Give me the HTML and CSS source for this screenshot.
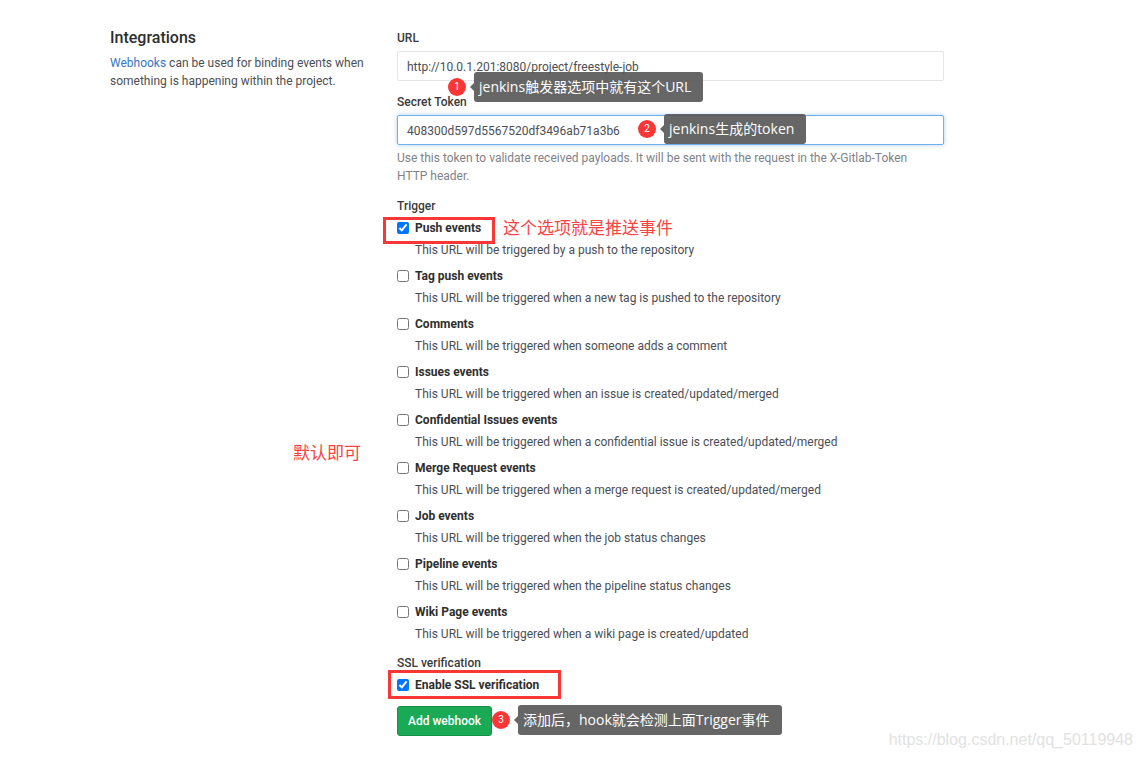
FILE: index.html
```html
<!DOCTYPE html>
<html lang="en">
<head>
<meta charset="utf-8">
<title>Integrations</title>
<meta name="viewport" content="width=device-width, initial-scale=1">
<link rel="stylesheet" href="styles.css">
</head>
<body>
<main class="settings">
  <aside class="intro">
    <h1 class="intro-title">Integrations</h1>
    <p class="intro-text"><a class="link" href="#webhooks">Webhooks</a> can be used for binding events when something is happening within the project.</p>
    <span class="note note-default" lang="zh">默认即可</span>
  </aside>

  <form class="hook-form" id="webhooks">
    <div class="field">
      <label class="label" for="url">URL</label>
      <input class="input" id="url" type="text" value="http://10.0.1.201:8080/project/freestyle-job">
      <div class="callout callout-url"><span class="badge">1</span><span class="bubble" lang="zh">jenkins触发器选项中就有这个URL</span></div>
    </div>

    <div class="field">
      <label class="label" for="token">Secret Token</label>
      <input class="input input-active" id="token" type="text" value="408300d597d5567520df3496ab71a3b6">
      <p class="help">Use this token to validate received payloads. It will be sent with the request in the X-Gitlab-Token HTTP header.</p>
      <div class="callout callout-token"><span class="badge">2</span><span class="bubble" lang="zh">jenkins生成的token</span></div>
    </div>

    <fieldset class="group">
      <legend class="label">Trigger</legend>
      <div class="option">
        <input class="check" type="checkbox" id="push" checked>
        <label class="option-name" for="push">Push events</label>
        <p class="option-text">This URL will be triggered by a push to the repository</p>
        <span class="frame frame-push"></span>
        <span class="note note-push" lang="zh">这个选项就是推送事件</span>
      </div>
      <div class="option">
        <input class="check" type="checkbox" id="tag">
        <label class="option-name" for="tag">Tag push events</label>
        <p class="option-text">This URL will be triggered when a new tag is pushed to the repository</p>
      </div>
      <div class="option">
        <input class="check" type="checkbox" id="comments">
        <label class="option-name" for="comments">Comments</label>
        <p class="option-text">This URL will be triggered when someone adds a comment</p>
      </div>
      <div class="option">
        <input class="check" type="checkbox" id="issues">
        <label class="option-name" for="issues">Issues events</label>
        <p class="option-text">This URL will be triggered when an issue is created/updated/merged</p>
      </div>
      <div class="option">
        <input class="check" type="checkbox" id="confidential">
        <label class="option-name" for="confidential">Confidential Issues events</label>
        <p class="option-text">This URL will be triggered when a confidential issue is created/updated/merged</p>
      </div>
      <div class="option">
        <input class="check" type="checkbox" id="merge">
        <label class="option-name" for="merge">Merge Request events</label>
        <p class="option-text">This URL will be triggered when a merge request is created/updated/merged</p>
      </div>
      <div class="option">
        <input class="check" type="checkbox" id="job">
        <label class="option-name" for="job">Job events</label>
        <p class="option-text">This URL will be triggered when the job status changes</p>
      </div>
      <div class="option">
        <input class="check" type="checkbox" id="pipeline">
        <label class="option-name" for="pipeline">Pipeline events</label>
        <p class="option-text">This URL will be triggered when the pipeline status changes</p>
      </div>
      <div class="option">
        <input class="check" type="checkbox" id="wiki">
        <label class="option-name" for="wiki">Wiki Page events</label>
        <p class="option-text">This URL will be triggered when a wiki page is created/updated</p>
      </div>
    </fieldset>

    <fieldset class="group">
      <legend class="label">SSL verification</legend>
      <div class="option">
        <input class="check" type="checkbox" id="ssl" checked>
        <label class="option-name" for="ssl">Enable SSL verification</label>
        <span class="frame frame-ssl"></span>
      </div>
    </fieldset>

    <div class="actions">
      <button class="button" type="button">Add webhook</button>
      <div class="callout callout-add"><span class="badge">3</span><span class="bubble" lang="zh">添加后，hook就会检测上面Trigger事件</span></div>
    </div>
  </form>
</main>
<span class="watermark">https://blog.csdn.net/qq_50119948</span>
</body>
</html>
```
FILE: styles.css
```css
* {
  box-sizing: border-box;
}

body {
  margin: 0;
  background: #fff;
  color: #4c4e54;
  font-family: Roboto, "Noto Sans CJK SC", sans-serif;
  font-size: 12px;
  line-height: 18px;
}

p {
  margin: 0;
}

.settings {
  display: grid;
  grid-template-columns: 277fr 547fr;
  column-gap: 10px;
  padding: 29px 197px 21px 110px;
}

.intro {
  position: relative;
}

.intro-title {
  margin: 0 0 7px;
  color: #2e2e2e;
  font-size: 16px;
  font-weight: 500;
  line-height: 18px;
}

.link {
  color: #3875c2;
  text-decoration: none;
}

.field {
  position: relative;
  margin-bottom: 12px;
}

.label {
  display: block;
  margin-bottom: 4px;
  padding: 0;
  color: #3a3a3a;
  font-weight: 500;
}

.input {
  display: block;
  width: 100%;
  height: 30px;
  padding: 1px 9px 0;
  border: 1px solid #e5e5e5;
  border-radius: 2px;
  background: #fff;
  color: #4c4e54;
  font: inherit;
}

.input-active {
  border-color: #73afea;
  box-shadow: 0 0 4px rgba(115, 175, 234, 0.6);
}

.help {
  margin-top: 4px;
  padding-right: 20px;
  color: #7f8288;
}

.group {
  min-width: 0;
  margin: 0 0 11px;
  padding: 0;
  border: 0;
}

.option {
  position: relative;
  display: grid;
  grid-template-columns: 12px 1fr;
  column-gap: 6px;
  row-gap: 4px;
  align-items: center;
}

.option + .option {
  margin-top: 8px;
}

.check {
  width: 12px;
  height: 12px;
  margin: 0;
  accent-color: #0075ff;
}

.option-name {
  justify-self: start;
  color: #2e2e2e;
  font-weight: 700;
}

.option-text {
  grid-column: 2;
}

.actions {
  position: relative;
  padding-top: 1px;
}

.button {
  height: 30px;
  padding: 0 10px;
  border: 1px solid #168f48;
  border-radius: 3px;
  background: #1aaa55;
  color: #fff;
  font: inherit;
  font-weight: 500;
}

.callout {
  position: absolute;
  display: flex;
  align-items: center;
  gap: 8px;
  white-space: nowrap;
}

.callout-url {
  top: 43px;
  left: 51px;
}

.callout-token {
  top: 21px;
  left: 241px;
}

.callout-add {
  top: 0;
  left: 95px;
}

.badge {
  width: 18px;
  height: 18px;
  border-radius: 50%;
  background: #fa3737;
  color: #fff;
  font-size: 10px;
  text-align: center;
}

.bubble {
  position: relative;
  height: 30px;
  padding: 0 12px 0 5px;
  border-radius: 3px;
  background: rgba(85, 85, 85, 0.9);
  color: #fff;
  font-family: "Open Sans", "Noto Sans CJK SC", sans-serif;
  font-size: 14px;
  line-height: 30px;
}

.bubble::before {
  content: "";
  position: absolute;
  top: 11px;
  left: -4px;
  border: 4px solid transparent;
  border-left: 0;
  border-right-color: #666;
}

.note {
  position: absolute;
  color: #fa4444;
  font-family: "Noto Sans CJK SC", sans-serif;
  font-size: 17px;
  line-height: 24px;
  white-space: nowrap;
}

.note-default {
  top: 411px;
  right: 26px;
}

.note-push {
  top: -4px;
  left: 106px;
}

.frame {
  position: absolute;
  border: 3px solid #fa3737;
  pointer-events: none;
}

.frame-push {
  top: -2px;
  left: -14px;
  width: 112px;
  height: 27px;
}

.frame-ssl {
  top: -6px;
  left: -9px;
  width: 173px;
  height: 29px;
}

.watermark {
  position: absolute;
  right: 8px;
  bottom: 8px;
  color: #e2e2e2;
  font-family: "Liberation Sans", Arial, sans-serif;
  font-size: 16px;
}
```
